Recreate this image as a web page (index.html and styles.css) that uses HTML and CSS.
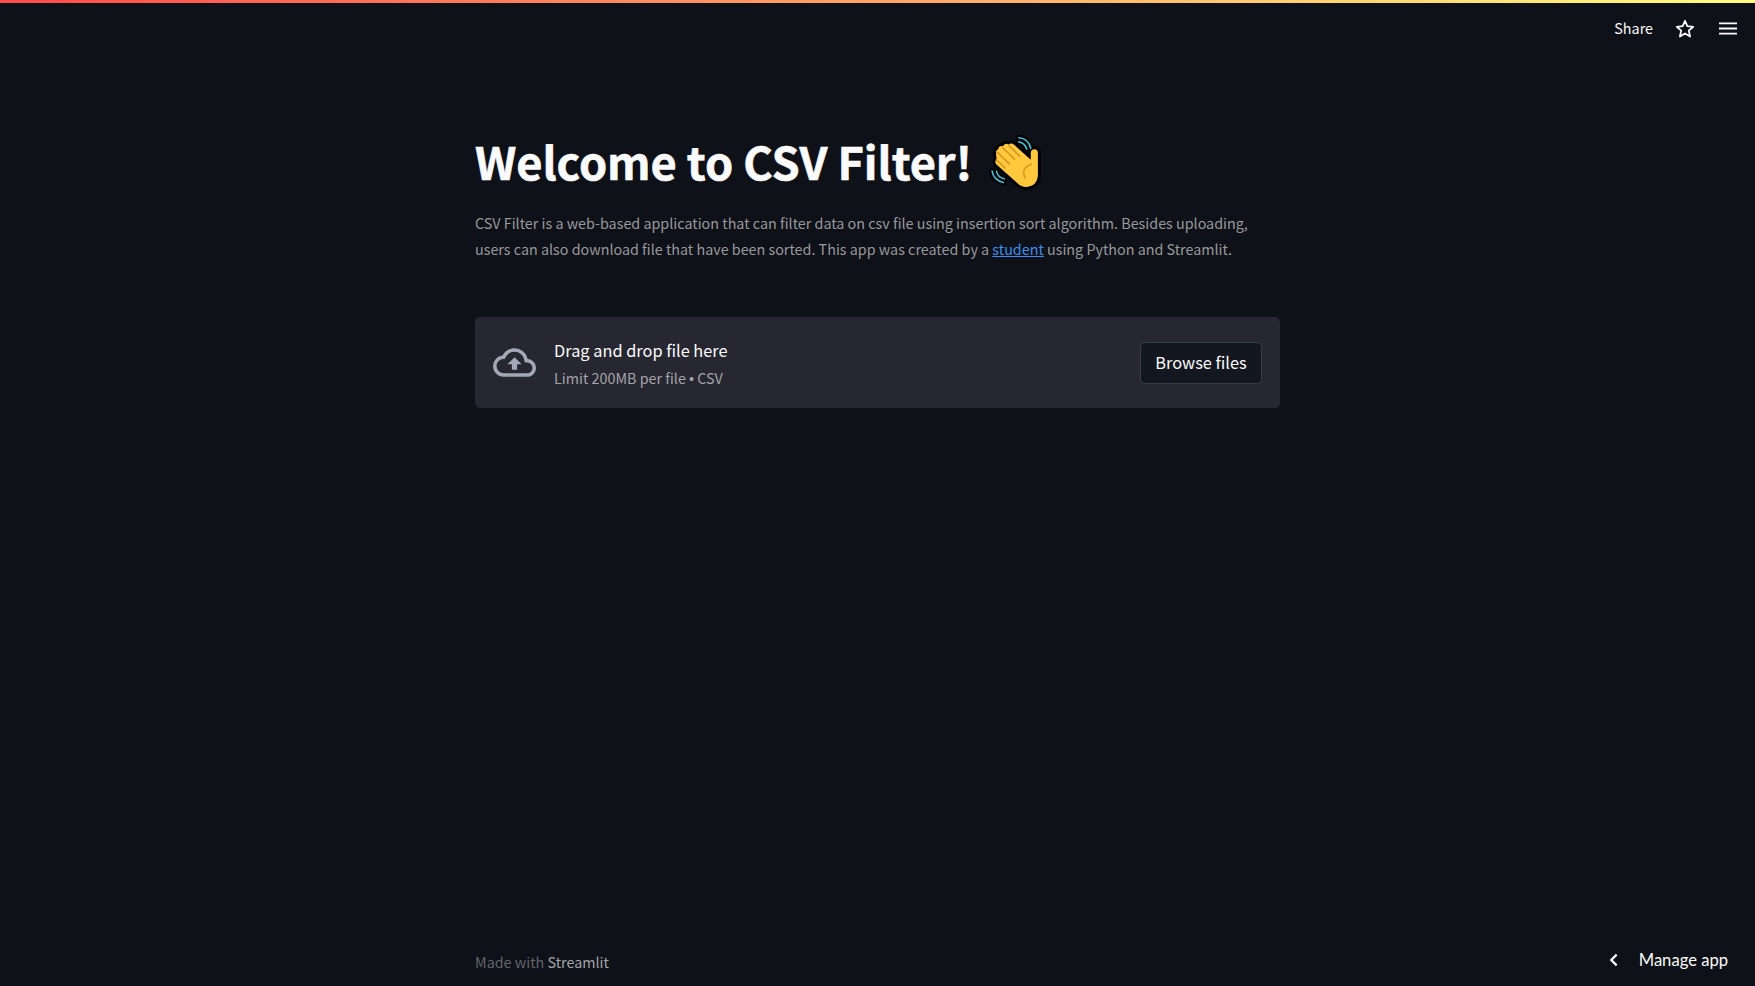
FILE: index.html
```html
<!DOCTYPE html>
<html lang="en">
<head>
<meta charset="utf-8">
<title>CSV Filter</title>
<link rel="stylesheet" href="styles.css">
</head>
<body>
<div class="decoration"></div>
<header class="toolbar">
  <span class="share">Share</span>
  <svg class="star" viewBox="0 0 18 18"><path d="M9 1.6 11.1 6.5 16.4 7 12.4 10.5 13.6 15.8 9 13 4.4 15.8 5.6 10.5 1.6 7 6.9 6.5Z"/></svg>
  <svg class="burger" viewBox="0 0 18 13"><path d="M0 1.3H18M0 6.5H18M0 11.7H18"/></svg>
</header>
<main class="content">
  <div class="heading">
    <h1>Welcome to CSV Filter!</h1>
    <svg class="wave" viewBox="25 15 165 170">
      <g class="outline">
        <path d="M49 71Q47 63 55 60Q57 48 69 51Q75 39 86 46Q94 39 102 47L151 91V70Q152 60 162 60Q173 61 172 73V139Q170 168 139 171Q124 172 112 160L49 104Q43 95 51 90L49 80Z"/>
        <path d="M116 26Q144 28 151 57M116 38Q133 41 139 59M37 124Q41 151 70 158M50 125Q54 143 73 147"/>
      </g>
      <path class="hand" d="M49 71Q47 63 55 60Q57 48 69 51Q75 39 86 46Q94 39 102 47L151 91V70Q152 60 162 60Q173 61 172 73V139Q170 168 139 171Q124 172 112 160L49 104Q43 95 51 90L49 80Z"/>
      <path class="crease" d="M87 50 118 80M68 55 103 89M53 69 88 103M50 91 75 115M152 104Q128 114 130 131Q131 139 135 145"/>
      <path class="motion" d="M116 26Q144 28 151 57M116 38Q133 41 139 59M37 124Q41 151 70 158M50 125Q54 143 73 147"/>
    </svg>
  </div>
  <p class="intro">CSV Filter is a web-based application that can filter data on csv file using insertion sort algorithm. Besides uploading,<br>users can also download file that have been sorted. This app was created by a <a href="#">student</a> using Python and Streamlit.</p>
  <section class="dropzone">
    <svg class="cloud" viewBox="0 0 24 24"><path d="M19.35 10.04A7.49 7.49 0 0 0 12 4C9.11 4 6.6 5.64 5.35 8.04A5.994 5.994 0 0 0 0 14c0 3.31 2.69 6 6 6h13c2.76 0 5-2.24 5-5 0-2.64-2.05-4.78-4.65-4.96zM19 18H6c-2.21 0-4-1.79-4-4 0-2.05 1.53-3.76 3.56-3.97l1.07-.11.5-.95A5.469 5.469 0 0 1 12 6c2.62 0 4.88 1.86 5.39 4.43l.3 1.5 1.53.11A2.98 2.98 0 0 1 22 15c0 1.65-1.35 3-3 3zM8 13h2.55v3h2.9v-3H16l-4-4z"/></svg>
    <div class="hint">
      <span class="hint-title">Drag and drop file here</span>
      <span class="hint-limit">Limit 200MB per file <span class="bullet">•</span> CSV</span>
    </div>
    <button class="browse">Browse files</button>
  </section>
</main>
<footer class="footer">
  <div class="made">Made with <span>Streamlit</span></div>
  <div class="manage">
    <svg class="chevron" viewBox="0 0 8 12"><path d="M6.8 1.2 2 6 6.8 10.8"/></svg>
    <span>Manage app</span>
  </div>
</footer>
</body>
</html>
```
FILE: styles.css
```css
* { box-sizing: border-box; }
body {
  margin: 0;
  height: 986px;
  display: flex;
  flex-direction: column;
  overflow: hidden;
  background: #0e1117;
  color: #fafafa;
  font-family: "Noto Sans CJK SC", "Noto Sans", sans-serif;
}
.decoration { height: 3px; flex: none; background: linear-gradient(90deg, #ff4b4b, #fffd80); }
.toolbar {
  height: 51px;
  flex: none;
  display: flex;
  align-items: center;
  justify-content: flex-end;
  padding-right: 18px;
}
.share { font-size: 14.35px; line-height: 24px; margin: 0 22px 2px 0; }
.star { width: 20px; height: 20px; margin-right: 24px; fill: none; stroke: #fafafa; stroke-width: 1.6; stroke-linejoin: round; }
.burger { width: 18px; height: 13px; fill: none; stroke: #fafafa; stroke-width: 1.8; }
.content { width: 805px; margin: 0 auto; flex: 1; padding-top: 77px; }
.heading { display: flex; align-items: center; height: 64px; }
h1 { margin: 0 0 5px; font-size: 45.2px; font-weight: 700; line-height: 59px; letter-spacing: -0.1px; white-space: nowrap; -webkit-text-stroke: 0.6px #fafafa; }
.wave { width: 56px; height: 57.7px; margin-left: 16px; flex: none; }
.outline { fill: #000; stroke: #000; stroke-width: 17; stroke-linejoin: round; stroke-linecap: round; }
.hand { fill: #ffc83d; }
.crease { fill: none; stroke: #d99a22; stroke-width: 5; stroke-linecap: round; }
.motion { fill: none; stroke: #40bcd8; stroke-width: 5; stroke-linecap: round; }
.intro { margin: 15px 0 0; font-size: 14.33px; line-height: 25.5px; color: #98999c; white-space: nowrap; }
.intro a { color: #3d8ef0; text-decoration: underline; }
.dropzone {
  margin-top: 56px;
  height: 91px;
  display: flex;
  align-items: center;
  padding: 0 18px;
  border-radius: 5px;
  background: #262730;
}
.cloud { width: 43px; height: 43px; fill: #a3a8b8; flex: none; }
.hint { display: flex; flex-direction: column; margin-left: 18px; padding-top: 3px; flex: 1; }
.hint-title { font-size: 16.35px; line-height: 28px; }
.hint-limit { font-size: 14.33px; line-height: 27px; color: #a3a4a9; }
.bullet { font-family: "Liberation Sans", sans-serif; }
.browse {
  width: 122px;
  height: 42px;
  padding: 0 0 2px;
  border: 1px solid #3b3d45;
  border-radius: 5px;
  background: #131720;
  color: #fafafa;
  font: 16.35px/28px "Noto Sans CJK SC", "Noto Sans", sans-serif;
}
.footer { display: grid; grid-template-columns: 1fr 805px 1fr; height: 49px; align-items: center; }
.made { grid-column: 2; font-size: 14.33px; line-height: 24px; color: #62656b; }
.made span { color: #a5a6a9; }
.manage { display: flex; align-items: center; justify-content: flex-end; padding: 0 27px 3px 0; font: 400 16.6px/24px "Lato", sans-serif; white-space: nowrap; }
.chevron { width: 9px; height: 14px; margin-right: 21px; fill: none; stroke: #fafafa; stroke-width: 2; }
```
